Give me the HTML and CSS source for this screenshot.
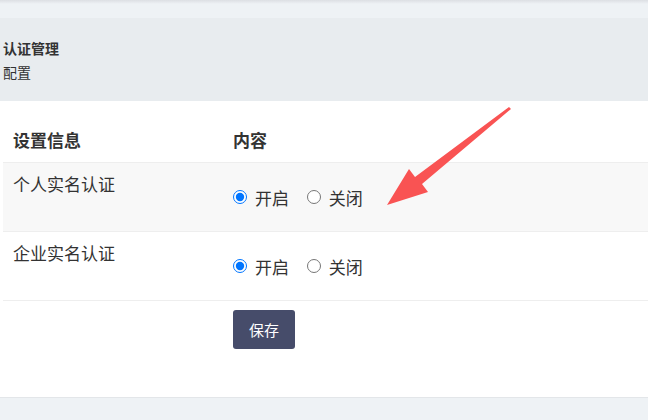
FILE: index.html
```html
<!DOCTYPE html>
<html lang="zh-CN">
<head>
    <meta charset="UTF-8">
    <meta name="viewport" content="width=device-width, initial-scale=1.0">
    <title>认证管理</title>
    <link rel="stylesheet" href="styles.css">
</head>
<body>
    <div class="topbar"></div>

    <div class="page-header">
        <div class="page-title">认证管理</div>
        <div class="page-sub">配置</div>
    </div>

    <div class="panel">
        <table class="settings">
            <thead>
                <tr>
                    <th class="col-name">设置信息</th>
                    <th>内容</th>
                </tr>
            </thead>
            <tbody>
                <tr class="striped">
                    <td class="name">个人实名认证</td>
                    <td class="value">
                        <label class="radio"><input type="radio" name="person" checked> 开启</label>
                        <label class="radio"><input type="radio" name="person"> 关闭</label>
                    </td>
                </tr>
                <tr>
                    <td class="name">企业实名认证</td>
                    <td class="value">
                        <label class="radio"><input type="radio" name="company" checked> 开启</label>
                        <label class="radio"><input type="radio" name="company"> 关闭</label>
                    </td>
                </tr>
                <tr class="actions">
                    <td></td>
                    <td><button class="btn-save">保存</button></td>
                </tr>
            </tbody>
        </table>

        <!-- annotation arrow drawn over the table -->
        <svg class="arrow" width="648" height="420" viewBox="0 0 648 420">
            <polygon points="387,205 409,169 415,177 509,107 511,109 422,184 428,192" fill="#f95353"/>
        </svg>
    </div>
</body>
</html>
```

FILE: styles.css
```css
body {
    margin: 0;
    font-family: "Noto Sans CJK SC", "Liberation Sans", sans-serif;
    color: #333;
    background: #eef2f5;
}

.topbar {
    height: 18px;
    background: linear-gradient(#dcdfe3 0, #eef2f5 4px, #eef2f5 100%);
}

.page-header {
    background: #e8ecef;
    padding: 18px 3px 17px;
    font-size: 14px;
    line-height: 24px;
}

.page-title {
    font-weight: bold;
}

.panel {
    background: #fff;
    border-bottom: 1px solid #e3e6e9;
    padding: 16px 0 48px 3px;
}

.settings {
    width: 100%;
    border-collapse: collapse;
    font-size: 17px;
    line-height: 25px;
}

.settings th {
    text-align: left;
    padding: 10px 10px;
    font-weight: bold;
}

.settings th.col-name {
    width: 200px;
}

.settings tbody tr {
    border-top: 1px solid #eeeeee;
}

.settings tr.striped {
    background: #f8f8f8;
}

.settings td {
    padding: 0 10px;
}

.settings td.name {
    vertical-align: top;
    padding-top: 8px;
    height: 60px;
}

.settings td.value {
    vertical-align: middle;
}

.radio {
    display: inline-flex;
    align-items: center;
    margin-right: 14px;
}

.radio input {
    width: 14px;
    height: 14px;
    margin: 0 8px 0 0;
}

.actions td {
    padding-top: 9px;
}

.btn-save {
    background: #464c6a;
    color: #fff;
    border: none;
    border-radius: 3px;
    width: 62px;
    height: 39px;
    font-family: inherit;
    font-size: 15px;
}

.arrow {
    position: absolute;
    top: 0;
    left: 0;
    pointer-events: none;
}
```
